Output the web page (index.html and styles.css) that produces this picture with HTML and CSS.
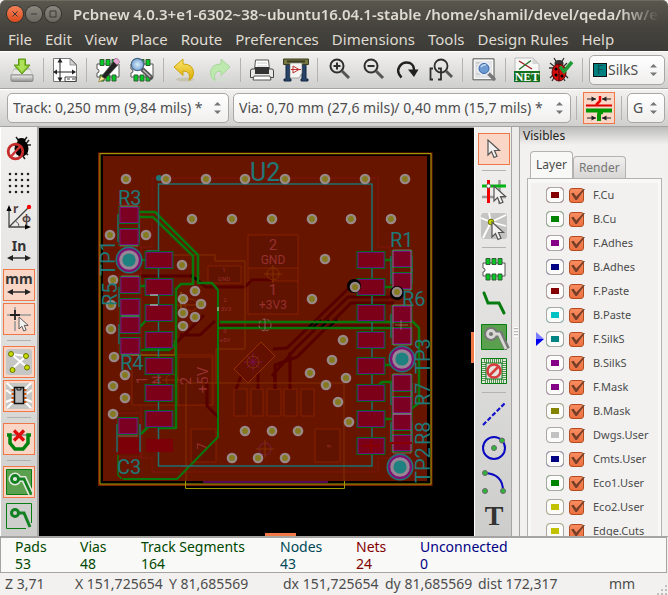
FILE: index.html
```html
<!DOCTYPE html>
<html lang="en">
<head>
<meta charset="utf-8">
<title>Pcbnew</title>
<link rel="stylesheet" href="styles.css">
</head>
<body>
<header class="titlebar">
  <button class="win win-close" aria-label="Close"><svg viewBox="0 0 16 16"><path d="M5.500 5.500l5 5M10.500 5.500l-5 5"/></svg></button>
  <button class="win" aria-label="Minimize"><svg viewBox="0 0 16 16"><path d="M5 8h6"/></svg></button>
  <button class="win" aria-label="Maximize"><svg viewBox="0 0 16 16"><path d="M5 5h6v6H5z"/></svg></button>
  <h1 class="title">Pcbnew 4.0.3+e1-6302~38~ubuntu16.04.1-stable /home/shamil/devel/qeda/hw/e</h1>
</header>
<nav class="menubar">
  <a href="#">File</a><a href="#">Edit</a><a href="#">View</a><a href="#">Place</a><a href="#">Route</a><a href="#">Preferences</a><a href="#">Dimensions</a><a href="#">Tools</a><a href="#">Design Rules</a><a href="#">Help</a>
</nav>

<svg class="defs" aria-hidden="true">
  <defs>
    <linearGradient id="gold" x1="0" y1="0" x2="0" y2="1"><stop offset="0" stop-color="#fbe870"/><stop offset="1" stop-color="#dca800"/></linearGradient>
    <linearGradient id="metal" x1="0" y1="0" x2="0" y2="1"><stop offset="0" stop-color="#f4f4f2"/><stop offset="1" stop-color="#8c8e8a"/></linearGradient>
    <radialGradient id="glass"><stop offset="0" stop-color="#d6ecfa"/><stop offset="1" stop-color="#78a4d4"/></radialGradient>
    <g id="via"><circle r="5.300" fill="#988888"/><circle r="2.900" fill="#857a1e"/></g>
    <g id="testpoint"><circle r="13.500" fill="#1f7676"/><circle r="12" fill="#7d1072"/><circle r="9.800" fill="#988494"/><circle r="6.600" fill="#1f8080"/></g>
    <g id="pad"><rect x="-14.500" y="-9" width="29" height="18" fill="#006a10"/><rect x="-13" y="-7.500" width="26" height="15" fill="#7c0018" stroke="#701080"/></g>
    <g id="chip"><rect x="-10" y="-8.500" width="20" height="17" fill="#7c0022" stroke="#08701a"/><rect x="-9" y="-7.500" width="18" height="15" fill="none" stroke="#7c1080"/></g>
    <g id="cursor"><path d="M0 0v15l3.500-3.500 2.500 6 3-1.300-2.500-5.700h5z" fill="#f4f2f0" stroke="#555" stroke-width="1.200"/></g>
    <g id="footprint"><path d="M1 6h22v13H1v-4a2 2 0 0 0 0-4z" fill="#fff" stroke="#555"/><path d="M4 1.500h4v6H4zM10 1.500h4v6h-4zM16 1.500h4v6h-4zM4 17h4v6H4zM10 17h4v6h-4zM16 17h4v6h-4z" fill="#00cc22" stroke="#345a38"/></g>
    <g id="arrows"><path d="M2 19h20" stroke="#333" stroke-width="1.500"/><path d="M0 19l6-3v6zM24 19l-6-3v6z" fill="#222"/></g>
  </defs>
</svg>

<div class="toolbar">
  <button class="tool" aria-label="Save"><svg viewBox="0 0 24 24"><path d="M3 12l3-4h12l3 4 2 5v5H1v-5z" fill="#c4c5c2"/><path d="M1 17h22v5a1.500 1.500 0 0 1-1.500 1.500h-19A1.500 1.500 0 0 1 1 22z" fill="url(#metal)" stroke="#888"/><path d="M4 12h16l2 4H2z" fill="#e7e7e4"/><path d="M8.500 1h7v6h4.500l-8 9-8-9h4.500z" fill="#84c62a" stroke="#5a9414"/><path d="M10 2h4v6h3l-5 6-5-6h3z" fill="#aee05a"/></svg></button>
  <span class="sep"></span>
  <button class="tool" aria-label="Page settings"><svg viewBox="0 0 24 24"><path d="M.500.500h17l6 6v17H.500z" fill="#fff" stroke="#777"/><path d="M17 1v6h6z" fill="#d5d5d5" stroke="#777" stroke-width=".700"/><path d="M7 3v19M2 14h20" stroke="#222"/><path d="M7 0l-2.500 4.500h5zM7 24l-2.500-4.500h5zM0 14l4-2.500v5zM23 14l-4-2.500v5z" fill="#222"/><path d="M12 19h11v4.500H12zM14 21h3M19 21h3" fill="#fff" stroke="#444"/></svg></button>
  <span class="sep"></span>
  <button class="tool" aria-label="Footprint editor"><svg viewBox="0 0 24 24"><use href="#footprint"/><path d="M5 19L18 3l4 4L8 22z" fill="#222" stroke="#555" stroke-width=".600"/><path d="M17 3l2-2.500q4-.500 4.500 4L21 7z" fill="#e7a5d4" stroke="#8a5c7e" stroke-width=".600"/><path d="M5 18l-2.500 6L9 21z" fill="#f4e3a0" stroke="#907820" stroke-width=".600"/></svg></button>
  <button class="tool" aria-label="Footprint viewer"><svg viewBox="0 0 24 24"><use href="#footprint"/><path d="M12.500 11.500l8.500 8" stroke="#555" stroke-width="4.500" stroke-linecap="round"/><path d="M13 12l7.500 7" stroke="#bbb" stroke-width="1.500"/><circle cx="7.500" cy="6.500" r="6.200" fill="url(#glass)" stroke="#4c6888" stroke-width="1.200"/></svg></button>
  <span class="sep"></span>
  <button class="tool" aria-label="Undo"><svg viewBox="0 0 24 24"><ellipse cx="12" cy="21.500" rx="9" ry="2" fill="#c6c4b2"/><path d="M1 9L10 1v5q11 0 10.500 10-.5 4-4.500 6.500 2.500-9.500-6-9.500v4.500z" fill="url(#gold)" stroke="#cda40c"/></svg></button>
  <button class="tool" aria-label="Redo" disabled><svg viewBox="0 0 24 24"><ellipse cx="12" cy="21.500" rx="9" ry="2" fill="#d2dccf"/><path d="M23 9L14 1v5Q3 6 3.500 16q.500 4 4.500 6.500Q5.500 13 14 13v4.500z" fill="#bee9ae" stroke="#a7d79b"/></svg></button>
  <span class="sep"></span>
  <button class="tool" aria-label="Print"><svg viewBox="0 0 24 24"><path d="M5.500 2h13l1 10h-15z" fill="#fff" stroke="#555"/><path d="M7 5h10M7 8h10" stroke="#ccc"/><path d="M2 11h20q1.500 0 1.500 2v6.500H.500V13q0-2 1.500-2z" fill="#e8e8e6" stroke="#444"/><path d="M5 9h14v7H5z" fill="#333"/><path d="M4 18h16l1 4H3z" fill="#fff" stroke="#555"/></svg></button>
  <button class="tool" aria-label="Plot"><svg viewBox="0 0 26 24"><path d="M3 6h4v15h1v2H1v-2h2zM19 6h4v15h2v2h-7v-2h1z" fill="#284468" stroke="#152942"/><path d="M.500 1h25v5.500H.500z" fill="#777741" stroke="#3d3d22"/><path d="M4 3.500h18" stroke="#3d3d22" stroke-width="2"/><path d="M7 5h12v10l-3 5H7z" fill="#f4f4f2" stroke="#777" stroke-width=".600"/><path d="M10 8v7l6-3.500zM8 11.500h10" fill="none" stroke="#c03030"/></svg></button>
  <span class="sep"></span>
  <button class="tool" aria-label="Zoom in"><svg viewBox="0 0 24 24" fill="none" stroke="#2e2e2e" stroke-width="2"><circle cx="10" cy="8" r="6.500"/><path d="M15 13l7 7" stroke="#555" stroke-width="3"/><path d="M6.500 8h7M10 4.500v7"/></svg></button>
  <button class="tool" aria-label="Zoom out"><svg viewBox="0 0 24 24" fill="none" stroke="#2e2e2e" stroke-width="2"><circle cx="10" cy="8" r="6.500"/><path d="M15 13l7 7" stroke="#555" stroke-width="3"/><path d="M6.500 8h7"/></svg></button>
  <button class="tool" aria-label="Redraw"><svg viewBox="0 0 24 24"><path d="M6.500 19.500Q1 14 4.500 8.500t10.500-3.500q4 2 4 7" fill="none" stroke="#202020" stroke-width="2.500"/><path d="M13 11.500h10.500L19 19z" fill="#202020"/></svg></button>
  <button class="tool" aria-label="Zoom to fit"><svg viewBox="0 0 24 24" fill="none" stroke="#2e2e2e" stroke-width="1.800"><circle cx="12" cy="8" r="6.500"/><path d="M17 13l6 6" stroke="#555" stroke-width="2.800"/><path d="M4 10.500H1.500v11H4M9 10.500h3v11H9"/></svg></button>
  <span class="sep"></span>
  <button class="tool" aria-label="Find"><svg viewBox="0 0 24 24"><path d="M1 .800h21v21H1z" fill="#f8f8f6" stroke="#555"/><path d="M3 3h17v17H3z" fill="#e3e4e6"/><path d="M4 5h10M4 8h4M4 16h12" stroke="#bbb"/><path d="M16 15l6 6" stroke="#777" stroke-width="3.500" stroke-linecap="round"/><circle cx="12" cy="10.500" r="6" fill="url(#glass)" stroke="#e8eef4" stroke-width="2"/><circle cx="12" cy="10.500" r="5" fill="#6e9ad2" stroke="#3c62a4"/><path d="M9 9q2-3 5-2" stroke="#c4dcf2" stroke-width="1.500" fill="none"/></svg></button>
  <span class="sep"></span>
  <button class="tool" aria-label="Netlist"><svg viewBox="0 0 26 24"><path d="M1 0h18l6 6v18H1z" fill="#f7f7f5" stroke="#bbb"/><path d="M18.500 0v6H25z" fill="#d5d5d5"/><path d="M5 3l13 8" stroke="#a32020" stroke-width="1.400"/><path d="M5 11.500L17 2.500" stroke="#23752b" stroke-width="1.400"/><path d="M0 13h26v11H0z" fill="#14701e"/><text x="13" y="22.500" class="net-word">NET</text></svg></button>
  <button class="tool" aria-label="Design rules check"><svg viewBox="0 0 24 24"><path d="M5 0l3 5M15 0l-3 5M0 10h20M1 20l4-4M19 20l-4-4M1 5l5 4M18 5l-4 4M3 23l3-5M16 23l-3-5" stroke="#333" stroke-width="1.300"/><ellipse cx="10" cy="5.500" rx="4.500" ry="3.500" fill="#333"/><ellipse cx="10" cy="14.500" rx="7" ry="8.500" fill="#d20a0a" stroke="#5c0505"/><path d="M10 6v17" stroke="#4b0404"/><circle cx="7" cy="11" r="1.500"/><circle cx="7" cy="17" r="1.500"/><circle cx="13" cy="18" r="1.500"/><path d="M11 8.500l4 5L23 4" fill="none" stroke="#1e9b36" stroke-width="3.500"/></svg></button>
  <span class="sep"></span>
  <label class="combo combo-layer"><span class="layer-chip">F</span>
    <select aria-label="Active layer"><option>SilkS</option></select>
    <svg class="spin" viewBox="0 0 7 14"><path d="M0 4.500L3.500 1 7 4.500zM0 9.500h7L3.500 13z"/></svg></label>
</div>
<div class="toolbar toolbar-sizes">
  <label class="combo combo-track"><select aria-label="Track width"><option>Track: 0,250 mm (9,84 mils) *</option></select><svg class="spin" viewBox="0 0 7 14"><path d="M0 4.500L3.500 1 7 4.500zM0 9.500h7L3.500 13z"/></svg></label>
  <label class="combo combo-via"><select aria-label="Via size"><option>Via: 0,70 mm (27,6 mils)/ 0,40 mm (15,7 mils) *</option></select><svg class="spin" viewBox="0 0 7 14"><path d="M0 4.500L3.500 1 7 4.500zM0 9.500h7L3.500 13z"/></svg></label>
  <span class="sep"></span>
  <button class="tool on" aria-label="Auto track width"><svg viewBox="0 0 26 26"><path d="M1 4h9M16 4h9M1 23h9M16 23h9" stroke="#222"/><path d="M10 4L5.500 1.500v5zM16 4l4.500-2.500v5zM10 23l-4.500-2.500v5zM16 23l4.500-2.500v5z" fill="#222"/><path d="M0 10.500h26" stroke="#dc0000" stroke-width="2"/><path d="M14 1v5l-4 4" fill="none" stroke="#f00000" stroke-width="2.500"/><path d="M0 15.500h26M17 17q-4 0-4 3v6" fill="none" stroke="#009600" stroke-width="4"/></svg></button>
  <span class="sep"></span>
  <label class="combo combo-grid"><select aria-label="Grid"><option>G</option></select><svg class="spin" viewBox="0 0 7 14"><path d="M0 4.500L3.500 1 7 4.500zM0 9.500h7L3.500 13z"/></svg></label>
</div>

<main class="workspace">
  <div class="side side-left">
    <button class="tool" aria-label="DRC off"><svg viewBox="0 0 24 24"><path d="M9 0l3 4M20 0l-3 4M4 8h20M22 3l-4 5M21 18l-4-4M18 22l-3-4" stroke="#222" stroke-width="1.500"/><ellipse cx="14.500" cy="4" rx="4" ry="3"/><ellipse cx="14.500" cy="11.500" rx="7" ry="8"/><circle cx="8.500" cy="14.500" r="7.300" fill="none" stroke="#c42c2c" stroke-width="2.800"/><path d="M4 19.500l9-10" stroke="#d03434" stroke-width="2.500"/></svg></button>
    <button class="tool" aria-label="Grid"><svg viewBox="0 0 24 24"><path d="M3 3h19M3 9h19M3 15h19M3 21h19" stroke="#222" stroke-width="2.600" stroke-linecap="round" stroke-dasharray="0 6"/></svg></button>
    <button class="tool" aria-label="Polar coordinates"><svg viewBox="0 0 24 24"><path d="M2 2v20h20M2 22L21 3" fill="none" stroke="#444" stroke-width="1.300"/><path d="M2 0L-.500 6h5zM24 22l-6-2.500v5z"/><path d="M8.500 16q4 2 3.500 6" fill="none" stroke="#555"/><circle cx="22" cy="2" r="2.200" fill="#f00"/><text x="6" y="8" class="glyph-r">r</text><text x="15" y="17" class="glyph-r glyph-phi">φ</text></svg></button>
    <button class="tool" aria-label="Inches"><svg viewBox="0 0 24 24"><text x="12" y="12" class="unit">In</text><use href="#arrows"/></svg></button>
    <button class="tool on" aria-label="Millimetres"><svg viewBox="0 0 24 24"><text x="12" y="11" class="unit">mm</text><use href="#arrows"/></svg></button>
    <button class="tool on" aria-label="Cursor shape"><svg viewBox="0 0 24 24"><path d="M8 0v5M8 14v10M0 8h4M13 8h11" stroke="#999" stroke-width="1.600"/><path d="M8 3v10M3 8h10" stroke="#222" stroke-width="1.800"/><g transform="translate(12 10) scale(.8)"><use href="#cursor"/></g></svg></button>
    <span class="sep"></span>
    <button class="tool on" aria-label="Ratsnest"><svg viewBox="0 0 26 26"><rect width="26" height="26" rx="3" fill="#c6c6c4"/><path d="M5 5l17 14M20 7L6 20M5 5l15 2" stroke="#fff" stroke-width="2"/><g fill="#c8dc00" stroke="#6b7400"><circle cx="5" cy="5" r="2.500"/><circle cx="20" cy="7" r="2.500"/><circle cx="6.500" cy="21" r="2.500"/><circle cx="21" cy="18.500" r="2.500"/></g></svg></button>
    <button class="tool on" aria-label="Module ratsnest"><svg viewBox="0 0 26 26"><rect width="26" height="26" rx="3" fill="#c6c6c4"/><path d="M7 6L1 0M7 12L0 7M7 16l-7 3M7 19l-6 6M19 6l6-6M19 12l7-5M19 16l7 3M19 19l6 6" stroke="#fff" stroke-width="2"/><path d="M7 6v15M19 6v15" stroke="#d45a18" stroke-width="3" stroke-dasharray="2 2"/><path d="M8.500 4.500h9v16h-9z" fill="#bbb" stroke="#111" stroke-width="1.500"/><path d="M11 5v2h4V5" fill="none" stroke="#111"/></svg></button>
    <span class="sep"></span>
    <button class="tool on" aria-label="Auto delete track"><svg viewBox="0 0 26 26"><path d="M3 9h20" stroke="#999" stroke-width="2"/><path d="M1 9h3v8l5 6h8l5-6V9h3" fill="none" stroke="#008410" stroke-width="3.500"/><path d="M8 4.500l10 10M18 4.500l-10 10" stroke="#e00d0d" stroke-width="3.200"/></svg></button>
    <span class="sep"></span>
    <button class="tool on" aria-label="Show filled zones"><svg viewBox="0 0 26 26"><path d="M.500.500h25v25H.500z" fill="#5aa04e" stroke="#087e12"/><path d="M9 10h9l7 15" fill="none" stroke="#e3e8dd" stroke-width="6"/><circle cx="9" cy="10" r="6.500" fill="#e3e8dd"/><path d="M9 10h9l7 15" fill="none" stroke="#138122" stroke-width="2.800"/><circle cx="9" cy="10" r="3.500" fill="#e3e8dd" stroke="#138122" stroke-width="2.800"/></svg></button>
    <button class="tool" aria-label="Hide filled zones"><svg viewBox="0 0 26 26"><path d="M20 25.500H.500V.500h25V20" fill="none" stroke="#087e12"/><path d="M11 10h7l6 14" fill="none" stroke="#138122" stroke-width="3"/><circle cx="9" cy="10" r="3.500" fill="none" stroke="#138122" stroke-width="3"/></svg></button>
  </div>

  <div class="canvas">
    <svg class="board" viewBox="39 128 435 408" preserveAspectRatio="xMidYMid slice" role="img" aria-label="Printed circuit board">
      <path d="M99 153.500h332.500V485H99z" fill="#000" stroke="#7a2200" stroke-width="2"/>
      <path d="M100 153.500h331V484H100z" fill="none" stroke="#a09a00"/>
      <rect x="103" y="156" width="324" height="325" fill="#681500"/>
      <g fill="none" stroke="#7c1410">
        <path d="M152 178h226v69h12v211h-12v14H152v-14h-11V247h11z"/>
        <path d="M119 204h21v44h-21zM118 274h23v84h-23zM117 413h24v44h-24z"/>
      </g>
      <g fill="#601300" stroke="#842000">
        <path d="M132 355h81v50h-81z"/><path d="M178 357h34v48h-34z"/>
        <path d="M248 235h50v33h-50zM248 281h50v33h-50zM248 268v13M298 268v13"/>
        <path d="M208 266h33v17h-33z"/>
        <path d="M234 389h13v27h-13zM251 389h12v27h-12zM267 389h14v27h-14zM284 389h13v27h-13zM301 389h13v27h-13z"/>
        <path d="M191 429h25v33h-25zM315 429h25v33h-25z"/>
      </g>
      <g fill="none" stroke="#560000" stroke-width="3" stroke-linejoin="round">
        <path d="M358 287l-9 1-62 60-14 1M394 297h-46l-52 51-24 28M394 303h-43l-54 54-22 8v24"/>
        <path d="M141 276h50l15 11h39l7-7h20M180 335h20l15-14M139 350h30l35-35M218 326h180"/>
        <path d="M247 362l-11 27M258 370v19M275 372v17M290 352v37M218 417l-11-11v-28"/>
      </g>
      <path d="M261 342l14 14-27 27-14-14z" fill="#641000" stroke="#963000"/>
      <g fill="none" stroke="#843000">
        <path d="M172 255h43v6h30v88h-29v35M186 481v-98h158v98"/>
        <path d="M185.500 481v7.500h159V481" stroke="#a09a00"/>
        <path d="M132 355h44M175 340v15M181 292v22" stroke="#8a7800"/>
        <circle cx="273" cy="274" r="6"/><path d="M264 274h18M273 265v18"/>
        <circle cx="191" cy="305" r="6"/><path d="M176 305h20"/>
        <circle cx="172" cy="380" r="6"/><path d="M162 380h20"/>
        <circle cx="265" cy="449" r="6" stroke="#742050"/><path d="M256 449h18M265 440v18"/>
        <path d="M253 353v18M244 362h18M247 356l12 12M259 356l-12 12" stroke="#7a1048"/><circle cx="253" cy="362" r="6"/>
      </g>
      <path d="M311 329l10-9M319 329l10-9M327 329l10-9M307 329l8-8M191 275l12 9" stroke="#000" stroke-width="2"/>
      <g fill="none" stroke="#08780c" stroke-width="2.500" stroke-linejoin="round">
        <path d="M138 212h17l43 43v28h14l6 7"/>
        <path d="M218 290v147l-41 42h-54" stroke-width="2"/>
        <path d="M138 217h15l40 39v28h-12l-5 5v139h-17"/>
        <path d="M139 286h9M141 350h28l7-7M140 327l8-9h10M220 322h172M218 328h174"/>
        <path d="M411 320l8 8v75l-8 6M384 260h10M384 287h9M384 419h10M370 394l12-12h11M384 365h9M139 260h8M141 434l8-8"/>
        <path d="M118 455v20l4 4" stroke-width="1.500"/>
      </g>
      <g fill="none" stroke="#1f7070" stroke-width="1.500">
        <path d="M158.500 251V184H372v282H158.500V251h-12"/>
        <path d="M118 214v28M139 214v28M119 287v20M119 324v20M117 424v28M140 424v28M391 256v28M412 256v28M391 314v24M391 383v22M412 383v22M391 422v22M412 422v22"/>
      </g>
      <circle cx="159" cy="178" r="3" fill="#1f7676"/>
      <use href="#pad" x="159" y="260"/><use href="#pad" x="159" y="287"/><use href="#pad" x="159" y="313"/><use href="#pad" x="159" y="340"/><use href="#pad" x="159" y="366"/><use href="#pad" x="159" y="393"/><use href="#pad" x="159" y="419"/>
      <rect x="146" y="439" width="27" height="13" fill="#7c0008"/>
      <use href="#pad" x="371" y="260"/><use href="#pad" x="371" y="287"/><use href="#pad" x="371" y="313"/><use href="#pad" x="371" y="340"/><use href="#pad" x="371" y="366"/><use href="#pad" x="371" y="393"/><use href="#pad" x="371" y="419"/><use href="#pad" x="371" y="446"/>
      <use href="#chip" x="129" y="215"/><use href="#chip" x="129" y="237"/><use href="#chip" x="130" y="285"/><use href="#chip" x="130" y="307"/><use href="#chip" x="130" y="325"/><use href="#chip" x="130" y="346"/><use href="#chip" x="128" y="426"/>
      <rect x="119" y="438" width="20" height="16" fill="#7c0008"/>
      <use href="#chip" x="402" y="259"/><use href="#chip" x="402" y="281"/><use href="#chip" x="402" y="314"/><use href="#chip" x="402" y="336"/><use href="#chip" x="402" y="383"/><use href="#chip" x="402" y="405"/><use href="#chip" x="402" y="422"/><use href="#chip" x="402" y="443"/>
      <g fill="none" stroke="#988888" stroke-width=".700">
        <path d="M120 206h18M120 246h18M121 276h18M121 316h18M121 355h18M118 436h20M393 250h18v40h-18zM393 305h18v40h-18zM393 374h18v40h-18zM393 414h18v39h-18z"/>
        <circle cx="265" cy="325" r="6" stroke-dasharray="3 2"/><path d="M265 319v12M395 325h13M401 320v10"/>
      </g>
      <path d="M362 446h18M371 439v14M390 443h22" stroke="#8a0000" stroke-width="2"/>
      <path d="M150 295h8M150 305h8M218 307v4" stroke="#ddd"/>
      <path d="M203 482h125" stroke="#700c70" stroke-width="1.500"/>
      <use href="#testpoint" x="129" y="260"/><use href="#testpoint" x="402" y="359"/><use href="#testpoint" x="400" y="467"/>
      <circle cx="354" cy="286" r="7"/><circle cx="397" cy="293" r="7"/>
      <g>
        <use href="#via" x="126" y="179"/><use href="#via" x="166" y="179"/><use href="#via" x="206" y="179"/><use href="#via" x="245" y="179"/><use href="#via" x="285" y="179"/><use href="#via" x="325" y="179"/><use href="#via" x="365" y="179"/><use href="#via" x="405" y="179"/>
        <use href="#via" x="192" y="219"/><use href="#via" x="232" y="219"/><use href="#via" x="272" y="219"/><use href="#via" x="312" y="219"/><use href="#via" x="351" y="219"/><use href="#via" x="391" y="219"/>
        <use href="#via" x="110" y="235"/><use href="#via" x="146" y="235"/><use href="#via" x="182" y="265"/><use href="#via" x="113" y="280"/><use href="#via" x="111" y="305"/><use href="#via" x="195" y="291"/><use href="#via" x="183" y="299"/><use href="#via" x="201" y="304"/><use href="#via" x="183" y="313"/><use href="#via" x="195" y="317"/><use href="#via" x="183" y="326"/>
        <use href="#via" x="325" y="259"/><use href="#via" x="312" y="299"/><use href="#via" x="355" y="287"/><use href="#via" x="397" y="292"/>
        <use href="#via" x="111" y="329"/><use href="#via" x="114" y="357"/><use href="#via" x="125" y="375"/><use href="#via" x="113" y="386"/><use href="#via" x="125" y="398"/><use href="#via" x="113" y="414"/>
        <use href="#via" x="245" y="431"/><use href="#via" x="232" y="458"/><use href="#via" x="258" y="458"/><use href="#via" x="272" y="431"/><use href="#via" x="298" y="431"/><use href="#via" x="285" y="458"/>
        <use href="#via" x="343" y="340"/><use href="#via" x="332" y="360"/><use href="#via" x="310" y="373"/><use href="#via" x="326" y="385"/><use href="#via" x="346" y="378"/><use href="#via" x="338" y="402"/><use href="#via" x="349" y="422"/>
      </g>
      <g class="silk">
        <text x="250" y="181" class="silk-big">U2</text>
        <text x="118" y="205">R3</text><text x="390" y="247">R1</text><text x="402" y="306">R6</text><text x="120" y="370">R4</text><text x="117" y="474">C3</text>
        <text transform="translate(115 276) rotate(-90)">TP1</text><text transform="translate(117 306) rotate(-90)">R5</text>
        <text transform="translate(430 374) rotate(-90)">TP3</text><text transform="translate(430 406) rotate(-90)">R7</text><text transform="translate(430 445) rotate(-90)">R8</text><text transform="translate(430 483) rotate(-90)">TP2</text>
      </g>
      <g class="netname">
        <text x="273" y="250" class="pin">2</text><text x="273" y="264">GND</text><text x="273" y="295" class="pin">1</text><text x="273" y="309">+3V3</text>
        <text x="224" y="272" class="tiny">1</text><text x="224" y="281" class="tiny">GND</text><text x="225" y="302" class="tiny">2</text><text x="226" y="311" class="tiny">3V3</text><text x="225" y="333" class="tiny">3</text><text x="225" y="342" class="tiny">+5V</text>
        <text transform="translate(147 380) rotate(-90)" class="pin">1</text><text transform="translate(161 380) rotate(-90)">N</text>
        <text transform="translate(191 381) rotate(-90)" class="pin">2</text><text transform="translate(208 380) rotate(-90)" class="pin">+5V</text>
        <text transform="translate(206 446) rotate(-90)">7</text><text transform="translate(331 446) rotate(-90)" class="tiny">8</text>
      </g>
    </svg>
    <span class="thumb thumb-v"></span><span class="thumb thumb-h"></span>
  </div>

  <div class="side side-right">
    <button class="tool on" aria-label="Select"><svg viewBox="0 0 24 24"><use href="#cursor" x="6" y="3"/></svg></button>
    <span class="sep"></span>
    <button class="tool" aria-label="Highlight net"><svg viewBox="0 0 24 24"><path d="M17.500 0v24M0 17h24" stroke="#999" stroke-width="2.500"/><path d="M6.500 0v23" stroke="#f00000" stroke-width="3"/><path d="M0 6h24" stroke="#00b414" stroke-width="3"/><circle cx="6.500" cy="6" r="2" fill="#fff" stroke="#777"/><use href="#cursor" x="12" y="6"/></svg></button>
    <button class="tool" aria-label="Local ratsnest"><svg viewBox="0 0 26 26"><rect width="26" height="26" rx="3" fill="#c4c4c2"/><path d="M10 9L0 5M10 9L8 0M10 9L25 2M10 9l15 4M10 9L2 25" stroke="#fff" stroke-width="1.800"/><circle cx="10" cy="9" r="2.800" fill="#c8dc00" stroke="#6b7400"/><use href="#cursor" x="11" y="9"/></svg></button>
    <span class="sep"></span>
    <button class="tool" aria-label="Add footprint"><svg viewBox="0 0 24 24"><use href="#footprint"/></svg></button>
    <button class="tool" aria-label="Add track"><svg viewBox="0 0 24 24"><path d="M2 2l4 10h11l5 10" fill="none" stroke="#067c10" stroke-width="3" stroke-linecap="round"/></svg></button>
    <button class="tool" aria-label="Add zone"><svg viewBox="0 0 26 26"><path d="M.500.500h25v25H.500z" fill="#5aa04e" stroke="#087e12"/><path d="M10 10h9l7 15" fill="none" stroke="#777" stroke-width="6"/><circle cx="10" cy="10" r="7" fill="#777"/><path d="M10 10h8l7 15" fill="none" stroke="#d8d8d4" stroke-width="2.800"/><circle cx="10" cy="10" r="3.500" fill="#777" stroke="#d8d8d4" stroke-width="2.800"/></svg></button>
    <button class="tool" aria-label="Add keepout"><svg viewBox="0 0 26 26"><path d="M.500.500h25v25H.500z" fill="#e6e8e0" stroke="#087e12"/><path d="M3 3h20v20H3z" fill="none" stroke="#4d9450" stroke-width="4" stroke-dasharray="1 1"/><path d="M5 5h16v16H5z" fill="#ddd" stroke="#087e12"/><circle cx="13" cy="13" r="6.500" fill="#e6e1dc" stroke="#d63c3c" stroke-width="2.500"/><path d="M9 17l8-8" stroke="#d63c3c" stroke-width="2.500"/></svg></button>
    <span class="sep"></span>
    <button class="tool" aria-label="Add line"><svg viewBox="0 0 24 24"><path d="M1 23L23 1" stroke="#1414c8" stroke-width="2.200" stroke-dasharray="4.500 2"/></svg></button>
    <button class="tool" aria-label="Add circle"><svg viewBox="0 0 24 24"><circle cx="12" cy="12" r="11" fill="none" stroke="#0a0ac0" stroke-width="2"/><g fill="#2fb53c" stroke="#666"><circle cx="12" cy="12" r="2.500"/><circle cx="20" cy="4.500" r="2.500"/></g></svg></button>
    <button class="tool" aria-label="Add arc"><svg viewBox="0 0 24 24"><path d="M3 3q18 1 18 18" fill="none" stroke="#0a0ac0" stroke-width="2"/><g fill="#2fb53c" stroke="#666"><circle cx="3" cy="3" r="2.500"/><circle cx="3" cy="21" r="2.500"/><circle cx="21" cy="21" r="2.500"/></g></svg></button>
    <button class="tool" aria-label="Add text"><svg viewBox="0 0 24 24"><text x="12" y="21" class="glyph-t">T</text></svg></button>
  </div>
  <div class="sash"><i class="grip"></i></div>

  <aside class="pane">
    <h2 class="pane-title">Visibles</h2>
    <div class="tabs"><button class="tab current">Layer</button><button class="tab">Render</button></div>
    <div class="page">
      <ul class="layers">
        <li><i class="mark"></i><button class="swatch maroon" aria-label="F.Cu colour"></button><input type="checkbox" id="l1" checked><label for="l1">F.Cu</label></li>
        <li><i class="mark"></i><button class="swatch green" aria-label="B.Cu colour"></button><input type="checkbox" id="l2" checked><label for="l2">B.Cu</label></li>
        <li><i class="mark"></i><button class="swatch purple" aria-label="F.Adhes colour"></button><input type="checkbox" id="l3" checked><label for="l3">F.Adhes</label></li>
        <li><i class="mark"></i><button class="swatch navy" aria-label="B.Adhes colour"></button><input type="checkbox" id="l4" checked><label for="l4">B.Adhes</label></li>
        <li><i class="mark"></i><button class="swatch maroon" aria-label="F.Paste colour"></button><input type="checkbox" id="l5" checked><label for="l5">F.Paste</label></li>
        <li><i class="mark"></i><button class="swatch cyan" aria-label="B.Paste colour"></button><input type="checkbox" id="l6" checked><label for="l6">B.Paste</label></li>
        <li><i class="mark active"></i><button class="swatch teal" aria-label="F.SilkS colour"></button><input type="checkbox" id="l7" checked><label for="l7">F.SilkS</label></li>
        <li><i class="mark"></i><button class="swatch purple" aria-label="B.SilkS colour"></button><input type="checkbox" id="l8" checked><label for="l8">B.SilkS</label></li>
        <li><i class="mark"></i><button class="swatch purple" aria-label="F.Mask colour"></button><input type="checkbox" id="l9" checked><label for="l9">F.Mask</label></li>
        <li><i class="mark"></i><button class="swatch olive" aria-label="B.Mask colour"></button><input type="checkbox" id="l10" checked><label for="l10">B.Mask</label></li>
        <li><i class="mark"></i><button class="swatch silver" aria-label="Dwgs.User colour"></button><input type="checkbox" id="l11" checked><label for="l11">Dwgs.User</label></li>
        <li><i class="mark"></i><button class="swatch navy" aria-label="Cmts.User colour"></button><input type="checkbox" id="l12" checked><label for="l12">Cmts.User</label></li>
        <li><i class="mark"></i><button class="swatch green" aria-label="Eco1.User colour"></button><input type="checkbox" id="l13" checked><label for="l13">Eco1.User</label></li>
        <li><i class="mark"></i><button class="swatch yellow" aria-label="Eco2.User colour"></button><input type="checkbox" id="l14" checked><label for="l14">Eco2.User</label></li>
        <li><i class="mark"></i><button class="swatch yellow" aria-label="Edge.Cuts colour"></button><input type="checkbox" id="l15" checked><label for="l15">Edge.Cuts</label></li>
      </ul>
    </div>
  </aside>
</main>

<dl class="info">
  <div class="c-green"><dt>Pads</dt><dd>53</dd></div>
  <div class="c-green"><dt>Vias</dt><dd>48</dd></div>
  <div class="c-green"><dt>Track Segments</dt><dd>164</dd></div>
  <div class="c-teal"><dt>Nodes</dt><dd>43</dd></div>
  <div class="c-red"><dt>Nets</dt><dd>24</dd></div>
  <div class="c-blue"><dt>Unconnected</dt><dd>0</dd></div>
</dl>
<footer class="status"><span>Z 3,71</span><span>X 151,725654</span><span>Y 81,685569</span><span>dx 151,725654</span><span>dy 81,685569</span><span>dist 172,317</span><span>mm</span><i class="resize"></i></footer>
</body>
</html>
```
FILE: styles.css
```css
* { box-sizing: border-box; }
body {
  margin: 0;
  height: 100vh;
  display: flex;
  flex-direction: column;
  overflow: hidden;
  background: #f2f1f0;
  color: #4c4c4c;
  font: 14px/18px "Noto Sans", "Open Sans", sans-serif;
}
button { padding: 0; border: 0; background: none; font: inherit; color: inherit; }
.defs { position: absolute; width: 0; height: 0; }

/* window frame */
.titlebar {
  flex: none;
  display: flex;
  align-items: center;
  gap: 3px;
  height: 28px;
  padding: 0 8px 0 7px;
  border-radius: 6px 6px 0 0;
  background: linear-gradient(#5a574e, #45433d);
  box-shadow: inset 0 1px #6d6a60;
}
.win {
  flex: none;
  width: 16px;
  height: 16px;
  border-radius: 50%;
  background: linear-gradient(#8a877f, #69675f);
  box-shadow: 0 0 0 1px #33322d;
}
.win svg { display: block; fill: none; stroke: #3a3934; }
.win-close { background: linear-gradient(#f4825a, #dc4a1c); }
.title {
  flex: 1;
  margin: 0 0 0 9px;
  overflow: hidden;
  white-space: nowrap;
  color: #dfdbd2;
  font-size: 15px;
  line-height: 20px;
  font-weight: 600;
  -webkit-mask-image: linear-gradient(to right, #000 93%, transparent);
  mask-image: linear-gradient(to right, #000 93%, transparent);
}
.menubar {
  flex: none;
  display: flex;
  gap: 13px;
  height: 23px;
  padding: 2px 8px 0;
  background: linear-gradient(#45433d, #3c3b37);
  font-size: 15px;
}
.menubar a { color: #dfdbd2; text-decoration: none; white-space: nowrap; }

/* toolbars */
.toolbar {
  flex: none;
  display: flex;
  align-items: center;
  height: 38px;
  padding: 0 3px 0 5px;
  border-top: 1px solid #fff;
  border-bottom: 1px solid #a5a4a2;
  background: linear-gradient(#f2f1f0, #cfcfcd);
}
.tool {
  flex: none;
  display: flex;
  align-items: center;
  justify-content: center;
  width: 32px;
  height: 32px;
  margin: 1px;
  border: 1px solid transparent;
}
.tool svg { display: block; width: 24px; height: 24px; overflow: visible; }
.tool svg[viewBox^="0 0 26"] { width: 26px; }
.tool svg[viewBox$="26 26"] { height: 26px; }
.tool.on { border-color: #f07746; background: #fad6c6; }
.sep { flex: none; width: 9px; height: 24px; display: flex; justify-content: center; }
.sep::before { content: ""; width: 1px; height: 100%; background: #b3b2b0; }
.toolbar-sizes { padding-left: 7px; gap: 1px; }

.combo {
  position: relative;
  display: flex;
  align-items: center;
  min-width: 0;
  height: 30px;
  border: 1px solid #a9a7a4;
  border-radius: 5px;
  background: linear-gradient(#fff, #f0efee);
}
.combo select {
  flex: 1;
  min-width: 0;
  height: 28px;
  padding: 0 16px 0 5px;
  border: 0;
  background: none;
  appearance: none;
  color: #4c4c4c;
  font: inherit;
}
.spin { position: absolute; right: 7px; width: 7px; height: 14px; fill: #777; pointer-events: none; }
.combo-layer { flex: 1; margin-left: 2px; padding-left: 3px; }
.combo-layer select { padding-left: 1px; }
.layer-chip {
  width: 14px;
  height: 14px;
  border: 1px solid #111;
  background: #008080;
  color: #0b4b4b;
  font-size: 12px;
  line-height: 12px;
  text-align: center;
}
.combo-track { flex: 0 0 222px; margin-right: 3px; }
.combo-via { flex: 1 1 338px; }
.combo-grid { flex: 0 0 38px; }

.net-word { font: 700 12px "Liberation Serif", serif; fill: #fff; text-anchor: middle; }
.glyph-r { font: 700 12px "Noto Sans", sans-serif; fill: #544; }
.glyph-phi { font-size: 11px; }
.unit { font: 700 14px "Noto Sans", sans-serif; fill: #333; text-anchor: middle; }
.glyph-t { font: 700 28px "Liberation Serif", serif; fill: #333; text-anchor: middle; }

/* workspace */
.workspace {
  flex: 1;
  min-height: 0;
  display: grid;
  grid-template-columns: 39px minmax(0, 1fr) 38px 8px 148px;
  grid-template-rows: minmax(0, 1fr);
  border-bottom: 1px solid #a5a4a2;
}
.side {
  display: flex;
  flex-direction: column;
  align-items: center;
  padding: 5px 3px 0 2px;
  overflow: hidden;
  border-left: 1px solid #fff;
  border-right: 2px solid #a5a4a2;
  background: linear-gradient(#f2f1f0, #cdcdcb);
}
.side-right { padding: 5px 1px 0 2px; border-right-width: 1px; }
.side .sep { width: 24px; height: 9px; align-items: center; }
.side .sep::before { width: 100%; height: 1px; }
.canvas { position: relative; overflow: hidden; background: #000; border-top: 1px solid #a5a4a2; }
.board { display: block; width: 100%; height: 100%; }
.silk { fill: #1f7878; font: 400 20px Roboto, sans-serif; }
.silk-big { font-size: 25px; }
.netname { fill: #963030; font: 400 12px Roboto, sans-serif; text-anchor: middle; }
.pin { font-size: 15px; }
.tiny { font-size: 6px; }
.thumb { position: absolute; background: #f07746; }
.thumb-v { right: 0; top: 50%; width: 3px; height: 31px; }
.thumb-h { left: 52%; bottom: 0; width: 31px; height: 3px; }
.sash { display: flex; align-items: center; justify-content: center; background: #edeceb; border-right: 1px solid #a5a4a2; }
.grip { width: 4px; height: 10px; background: repeating-linear-gradient(#fff 0 1px, #b5b4b2 1px 2px, #edeceb 2px 3px); }

/* layers pane */
.pane { display: flex; flex-direction: column; min-height: 0; padding-right: 3px; }
.pane-title {
  flex: none;
  margin: 0 -3px 0 0;
  padding: 0 3px;
  height: 18px;
  color: #222;
  font-size: 12px;
  line-height: 17px;
  font-weight: 400;
  background: linear-gradient(#bcbcba, #f2f1f0);
}
.tabs { flex: none; display: flex; align-items: flex-end; height: 34px; padding: 0 11px 0 10px; margin-top: -1px; font-size: 12px; }
.tab { height: 22px; padding: 0 5px; border: 1px solid #b3b2b0; border-bottom: 0; border-radius: 4px 4px 0 0; background: linear-gradient(#f0efee, #d8d7d5); color: #777; }
.tab.current { height: 27px; background: #f8f8f7; color: #4c4c4c; }
.page { flex: 1; min-height: 0; overflow: hidden; margin: 0 3px 0 7px; padding: 4px 3px 0; border: 1px solid #b3b2b0; border-bottom: 0; background: #f8f8f7; }
.layers { margin: 0; padding: 0; list-style: none; background: #f2f1f0; font-size: 11px; }
.layers li { display: flex; align-items: center; height: 24px; padding-left: 5px; }
.mark { width: 8px; height: 14px; margin-right: 2px; }
.mark.active { background: linear-gradient(#7c7cff 50%, #0000f0 50%); clip-path: polygon(0 0, 100% 50%, 0 100%); }
.swatch { width: 18px; height: 16px; padding: 4px; border: 1px solid #a9a7a4; border-radius: 4px; background-color: currentColor; box-shadow: inset 0 0 0 4px #fcfcfb; }
.layers input {
  position: relative;
  width: 15px;
  height: 15px;
  margin: 0 9px 0 5px;
  appearance: none;
  border: 1px solid #b04c20;
  border-radius: 3px;
  background: linear-gradient(#f88c60, #ee7040);
}
.layers input:checked::before {
  content: "";
  position: absolute;
  inset: 0 -2px 1px 1px;
  background: #74402a;
  clip-path: polygon(0 42%, 18% 36%, 38% 66%, 92% 0, 100% 5%, 42% 96%, 32% 96%);
}
.maroon { color: #840000; }
.green { color: #008400; }
.purple { color: #840084; }
.navy { color: #000084; }
.cyan { color: #00c2c2; }
.teal { color: #008484; }
.olive { color: #848400; }
.silver { color: #c2c2c2; }
.yellow { color: #c2c200; }

/* bottom bars */
.info {
  flex: none;
  display: grid;
  grid-template-columns: 65px 61px 139px 76px 64px 1fr;
  margin: 0 1px 0 0;
  padding: 0 0 0 14px;
  height: 36px;
  border: 1px solid #a5a4a2;
  background: #f9f9f7;
  line-height: 17px;
}
.info dd { margin: 0; }
.c-green { color: #004800; }
.c-teal { color: #004858; }
.c-red { color: #840000; }
.c-blue { color: #000084; }
.status {
  flex: none;
  display: grid;
  grid-template-columns: 70px 94px 114px 102px 93px 131px 1fr 12px;
  align-items: center;
  height: 22px;
  padding-left: 5px;
  white-space: nowrap;
}
.resize { align-self: end; width: 11px; height: 11px; background: radial-gradient(circle, #bbb 1px, transparent 1px) 0 0 / 4px 4px; clip-path: polygon(100% 0, 100% 100%, 0 100%); }
```
